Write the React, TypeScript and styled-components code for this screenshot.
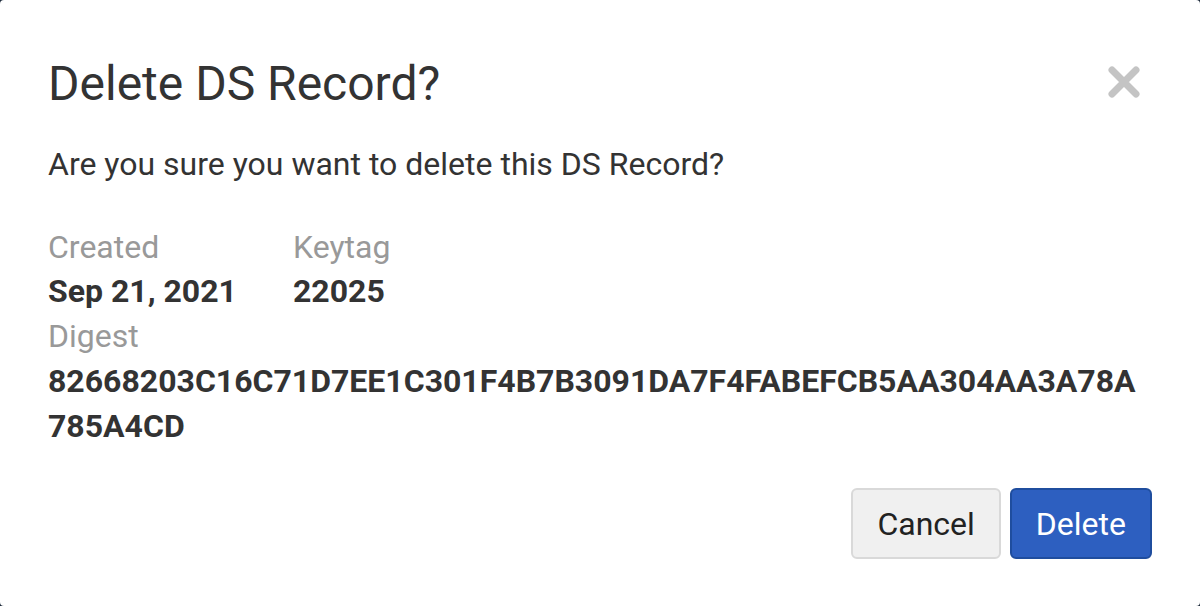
import React from 'react';
import styled, { createGlobalStyle } from 'styled-components';

const Global = createGlobalStyle`
	html, body {
		margin: 0;
		padding: 0;
		background: #1c2a3a;
	}
	* {
		box-sizing: border-box;
	}
`;

const Modal = styled('div')`
	width: 1200px;
	height: 606px;
	background: #fff;
	border-radius: 4px;
	padding: 55px 48px 47px 48px;
	font-family: Roboto, 'Liberation Sans', sans-serif;
	color: #333;
	display: flex;
	flex-direction: column;
`;

const Header = styled('div')`
	display: flex;
	align-items: center;
	justify-content: space-between;
`;

const Title = styled('h1')`
	margin: 0;
	font-size: 48px;
	line-height: 57.6px;
	font-weight: 400;
	color: #333;
`;

const Close = styled('button')`
	border: 0;
	background: none;
	padding: 0;
	margin: -4px 12px 0 0;
	width: 32px;
	height: 32px;
	cursor: pointer;
	display: flex;
`;

const Message = styled('p')`
	margin: 27px 0 0 0;
	font-size: 32px;
	line-height: 48px;
	color: #333;
`;

const Details = styled('div')`
	margin-top: 37px;
	display: grid;
	grid-template-columns: 245px 1fr;
	font-size: 32px;
	line-height: 44.8px;
`;

const Field = styled('div')<{ $wide?: boolean }>`
	grid-column: ${(p) => (p.$wide ? '1 / span 2' : 'auto')};
	min-width: 0;
`;

const Label = styled('div')`
	color: #999;
`;

const Value = styled('div')`
	font-weight: 700;
	color: #333;
	word-break: break-all;
`;

const Footer = styled('div')`
	margin-top: auto;
	display: flex;
	justify-content: flex-end;
	gap: 9px;
`;

const Button = styled('button')<{ $primary?: boolean }>`
	height: 71px;
	padding: 0 24px;
	font-family: Roboto, 'Liberation Sans', sans-serif;
	font-size: 32px;
	border-radius: 6px;
	border: 2px solid ${(p) => (p.$primary ? '#1f4d9e' : '#d9d9d9')};
	background: ${(p) => (p.$primary ? '#2d5fc0' : '#f0f0f0')};
	color: ${(p) => (p.$primary ? '#fff' : '#222')};
	cursor: pointer;
`;

const App = () => {
	return (
		<>
			<Global />
			<Modal>
				<Header>
					<Title>Delete DS Record?</Title>
					<Close aria-label="Close">
						<svg width="32" height="32" viewBox="0 0 32 32">
							<path d="M4 4 L28 28 M28 4 L4 28" stroke="#c4c4c4" strokeWidth="7" strokeLinecap="round" />
						</svg>
					</Close>
				</Header>
				<Message>Are you sure you want to delete this DS Record?</Message>
				<Details>
					<Field>
						<Label>Created</Label>
						<Value>Sep 21, 2021</Value>
					</Field>
					<Field>
						<Label>Keytag</Label>
						<Value>22025</Value>
					</Field>
					<Field $wide>
						<Label>Digest</Label>
						<Value>82668203C16C71D7EE1C301F4B7B3091DA7F4FABEFCB5AA304AA3A78A785A4CD</Value>
					</Field>
				</Details>
				<Footer>
					<Button>Cancel</Button>
					<Button $primary>Delete</Button>
				</Footer>
			</Modal>
		</>
	);
};

export default App;
